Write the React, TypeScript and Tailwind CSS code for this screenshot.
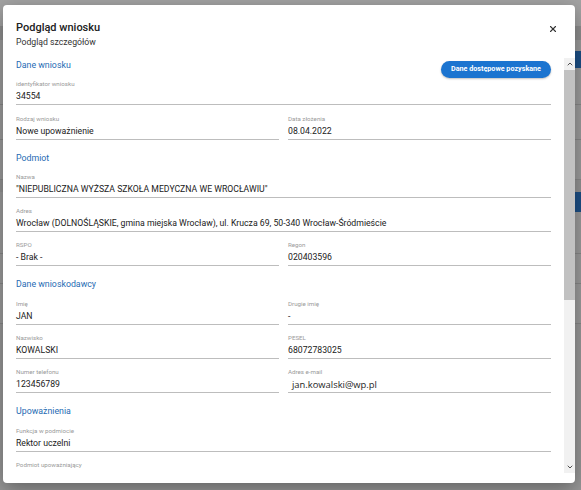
import React from 'react';
import { X, ChevronUp, ChevronDown } from 'lucide-react';

type FieldProps = {
  label: string;
  value: string;
  email?: boolean;
};

const Field = ({ label, value, email }: FieldProps) => (
  <div className="flex flex-col pt-[9.3px] border-b border-[#bdbdbd]">
    <span className="text-[6.2px] leading-[8px] text-[#9a9a9a] whitespace-nowrap">{label}</span>
    {email ? (
      <span className="mt-[1px] pl-[4px] text-[9.4px] leading-[15px] text-[#1e1e1e] whitespace-nowrap [font-family:'Open_Sans',sans-serif]">{value}</span>
    ) : (
      <span className="mt-[1px] text-[8.7px] leading-[15px] text-[#212121] whitespace-nowrap">{value}</span>
    )}
  </div>
);

const Heading = ({ children }: { children: React.ReactNode }) => (
  <h6 className="pt-[12px] text-[8.8px] leading-[12px] text-[#1f6bb3]">{children}</h6>
);

const Row = ({ children }: { children: React.ReactNode }) => (
  <div className="grid grid-cols-2 gap-x-[9px]">{children}</div>
);

// underlying page, dimmed by the overlay
const Backdrop = () => (
  <div className="flex flex-col h-full w-full bg-[#9c9c9c]">
    <div className="h-[26px] bg-[#a3a3a3]"></div>
    <div className="h-[14px] bg-[#8f8f8f]"></div>
    <div className="h-[11px]"></div>
    <div className="flex flex-row justify-end h-[17px]">
      <div className="w-[6px] bg-[#1c4f86]"></div>
    </div>
    <div className="h-[37px] border-b border-[#888]"></div>
    <div className="h-[35px] border-b border-[#888]"></div>
    <div className="h-[40px] border-b border-[#8a8a8a]"></div>
    <div className="h-[12px] bg-[#949494]"></div>
    <div className="flex flex-row justify-end h-[20px]">
      <div className="w-[6px] bg-[#1c4f86]"></div>
    </div>
    <div className="h-[42px] border-b border-[#888]"></div>
    <div className="h-[30px] border-b border-[#888]"></div>
    <div className="h-[40px] border-b border-[#888]"></div>
    <div className="flex-1 bg-[#989898]"></div>
  </div>
);

export default function App() {
  return (
    <main className="relative w-[581px] h-[490px] overflow-hidden [font-family:Roboto,'Liberation_Sans',sans-serif]">
      <Backdrop />

      <section className="absolute left-[3px] top-[5px] w-[572px] h-[478px] flex flex-col bg-white rounded-[4px] shadow-[0_6px_20px_rgba(0,0,0,0.35)]">
        <header className="relative flex flex-col pl-[13px] pt-[15px] pb-[10px]">
          <h2 className="text-[11px] leading-[16px] font-medium text-[#212121]">Podgląd wniosku</h2>
          <p className="text-[8.7px] leading-[12px] text-[#333]">Podgląd szczegółów</p>
          <button className="absolute right-[17px] top-[19px] text-[#333]">
            <X size={10} strokeWidth={2.6} />
          </button>
        </header>

        <div className="flex flex-row h-[415px]">
          <div className="flex-1 flex flex-col overflow-hidden pl-[13px] pr-[13px]">
            <div className="flex flex-row justify-between items-start h-[13px]">
              <h6 className="pt-[1px] text-[8.8px] leading-[12px] text-[#1f6bb3]">Dane wniosku</h6>
              <span className="mt-[3px] h-[17px] w-[110px] shrink-0 flex items-center justify-center rounded-full bg-[#1b74d0] text-white text-[7.2px] font-bold shadow-[0_1px_2px_rgba(0,0,0,0.25)]">
                Dane dostępowe pozyskane
              </span>
            </div>
            <Field label="identyfikator wniosku" value="34554" />
            <Row>
              <Field label="Rodzaj wniosku" value="Nowe upoważnienie" />
              <Field label="Data złożenia" value="08.04.2022" />
            </Row>

            <Heading>Podmiot</Heading>
            <Field label="Nazwa" value={'"NIEPUBLICZNA WYŻSZA SZKOŁA MEDYCZNA WE WROCŁAWIU"'} />
            <Field label="Adres" value="Wrocław (DOLNOŚLĄSKIE, gmina miejska Wrocław), ul. Krucza 69, 50-340 Wrocław-Śródmieście" />
            <Row>
              <Field label="RSPO" value="- Brak -" />
              <Field label="Regon" value="020403596" />
            </Row>

            <Heading>Dane wnioskodawcy</Heading>
            <Row>
              <Field label="Imię" value="JAN" />
              <Field label="Drugie imię" value="-" />
            </Row>
            <Row>
              <Field label="Nazwisko" value="KOWALSKI" />
              <Field label="PESEL" value="68072783025" />
            </Row>
            <Row>
              <Field label="Numer telefonu" value="123456789" />
              <Field label="Adres e-mail" value="jan.kowalski@wp.pl" email />
            </Row>

            <Heading>Upoważnienia</Heading>
            <Field label="Funkcja w podmiocie" value="Rektor uczelni" />
            <Field label="Podmiot upoważniający" value={'\u00a0'} />
          </div>

          <div className="w-[11px] flex flex-col bg-[#f1f1f1]">
            <div className="h-[12px] flex items-center justify-center text-[#505050]">
              <ChevronUp size={8} strokeWidth={3} />
            </div>
            <div className="h-[230px] bg-[#c1c1c1]"></div>
            <div className="flex-1"></div>
            <div className="h-[12px] flex items-center justify-center text-[#505050]">
              <ChevronDown size={8} strokeWidth={3} />
            </div>
          </div>
        </div>
      </section>
    </main>
  );
}
